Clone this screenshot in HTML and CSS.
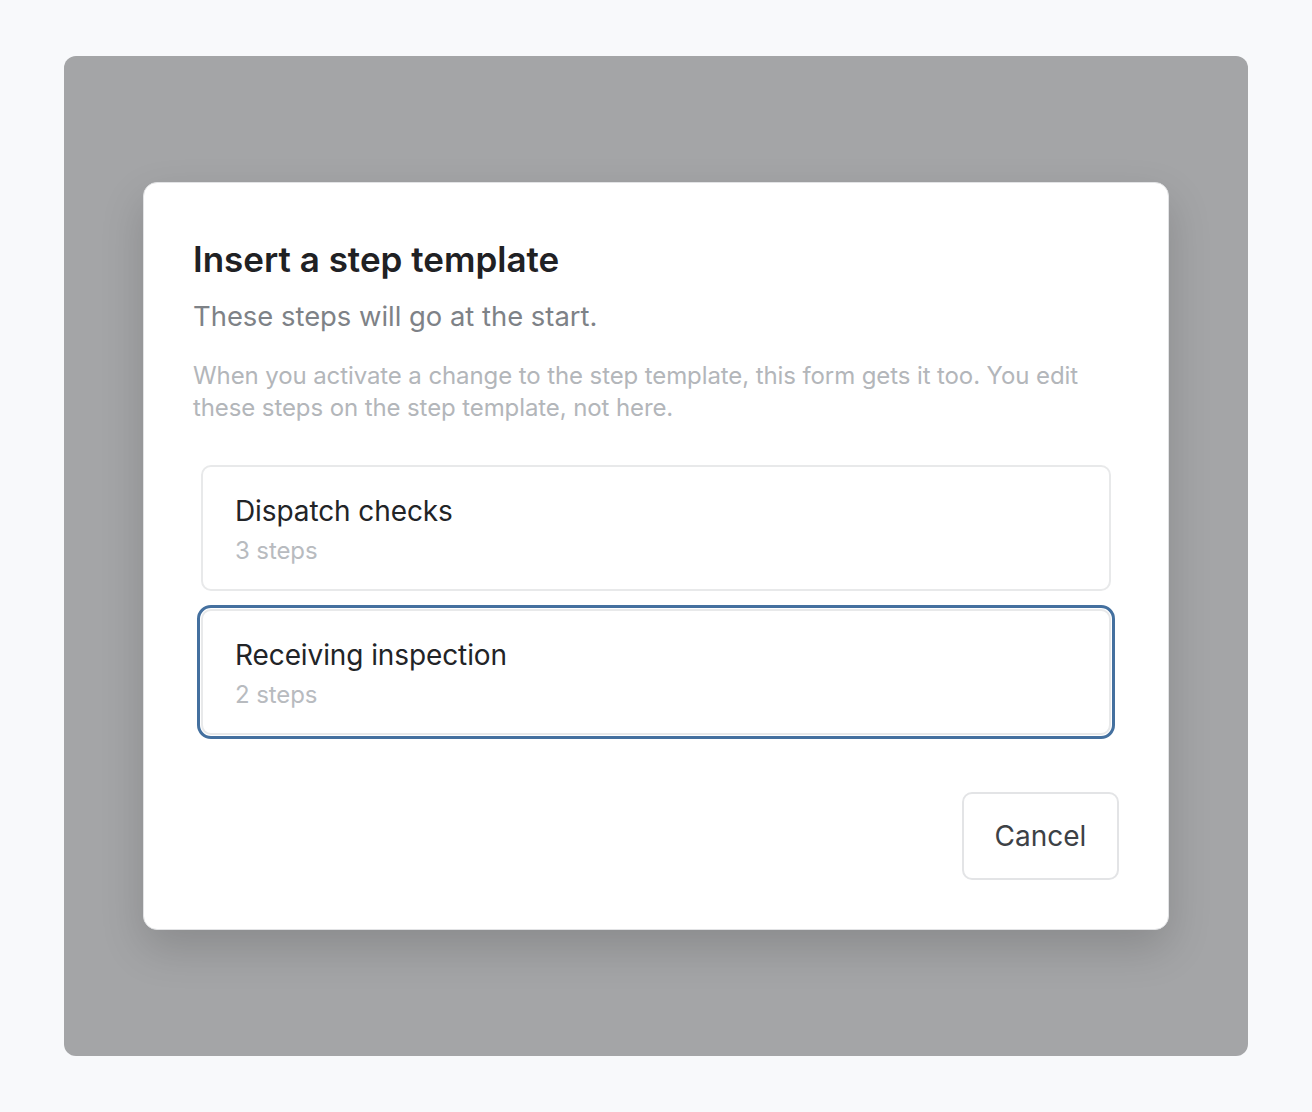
FILE: index.html
```html
<!DOCTYPE html>
<html lang="en">
<head>
<meta charset="utf-8">
<title>Insert a step template</title>
<link rel="stylesheet" href="styles.css">
</head>
<body>
<div class="stage">
  <div class="backdrop">
    <div class="modal" role="dialog" aria-labelledby="dlg-title">
      <h1 class="modal-title" id="dlg-title">Insert a step template</h1>
      <p class="modal-subtitle">These steps will go at the start.</p>
      <p class="modal-note">When you activate a change to the step template, this form gets it too. You edit these steps on the step template, not here.</p>
      <div class="template-list">
        <button class="template-card" type="button">
          <span class="template-name">Dispatch checks</span>
          <span class="template-count">3 steps</span>
        </button>
        <button class="template-card is-selected" type="button">
          <span class="template-name">Receiving inspection</span>
          <span class="template-count">2 steps</span>
        </button>
      </div>
      <div class="modal-actions">
        <button class="btn-cancel" type="button">Cancel</button>
      </div>
    </div>
  </div>
</div>
</body>
</html>
```

FILE: styles.css
```css
* { box-sizing: border-box; }

html, body {
  margin: 0;
  padding: 0;
}

body {
  background: #f8f9fb;
  font-family: Inter, "Noto Sans", "Liberation Sans", sans-serif;
  color: #1f2124;
}

.stage {
  padding: 56px 64px;
}

.backdrop {
  height: 1000px;
  background: #a4a5a7;
  border-radius: 12px;
  padding: 126px 79px 0 79px;
}

.modal {
  background: #ffffff;
  border: 1px solid #e2e3e5;
  border-radius: 14px;
  box-shadow: 0 18px 44px rgba(0, 0, 0, 0.16);
  padding: 54px 49px 49px 49px;
  display: flex;
  flex-direction: column;
}

.modal-title {
  margin: 0;
  font-size: 35px;
  line-height: 44px;
  font-weight: 600;
  letter-spacing: 0;
  color: #1f2124;
}

.modal-subtitle {
  margin: 18px 0 0 0;
  font-size: 27.4px;
  line-height: 34px;
  font-weight: 400;
  color: #7e8287;
}

.modal-note {
  margin: 27px 0 0 0;
  font-size: 24px;
  line-height: 32px;
  letter-spacing: -0.1px;
  color: #b3b6ba;
}

.template-list {
  margin-top: 41px;
  padding: 0 8px;
  display: flex;
  flex-direction: column;
  gap: 18px;
}

.template-card {
  display: flex;
  flex-direction: column;
  align-items: flex-start;
  gap: 7px;
  width: 100%;
  height: 126px;
  padding: 26px 32px 0 32px;
  background: #ffffff;
  border: 2px solid #e8e9ea;
  border-radius: 10px;
  font-family: inherit;
  text-align: left;
  cursor: pointer;
}

.template-card.is-selected {
  outline: 3px solid #44709f;
  outline-offset: 1px;
}

.template-name {
  font-size: 28px;
  line-height: 36px;
  letter-spacing: -0.1px;
  color: #222427;
}

.template-count {
  font-size: 24px;
  line-height: 30px;
  letter-spacing: -0.1px;
  color: #b8bbbf;
}

.modal-actions {
  margin-top: 57px;
  display: flex;
  justify-content: flex-end;
}

.btn-cancel {
  width: 157px;
  height: 88px;
  background: #ffffff;
  border: 2px solid #e3e4e6;
  border-radius: 10px;
  font-family: inherit;
  font-size: 28px;
  color: #3d4146;
  cursor: pointer;
}
```
